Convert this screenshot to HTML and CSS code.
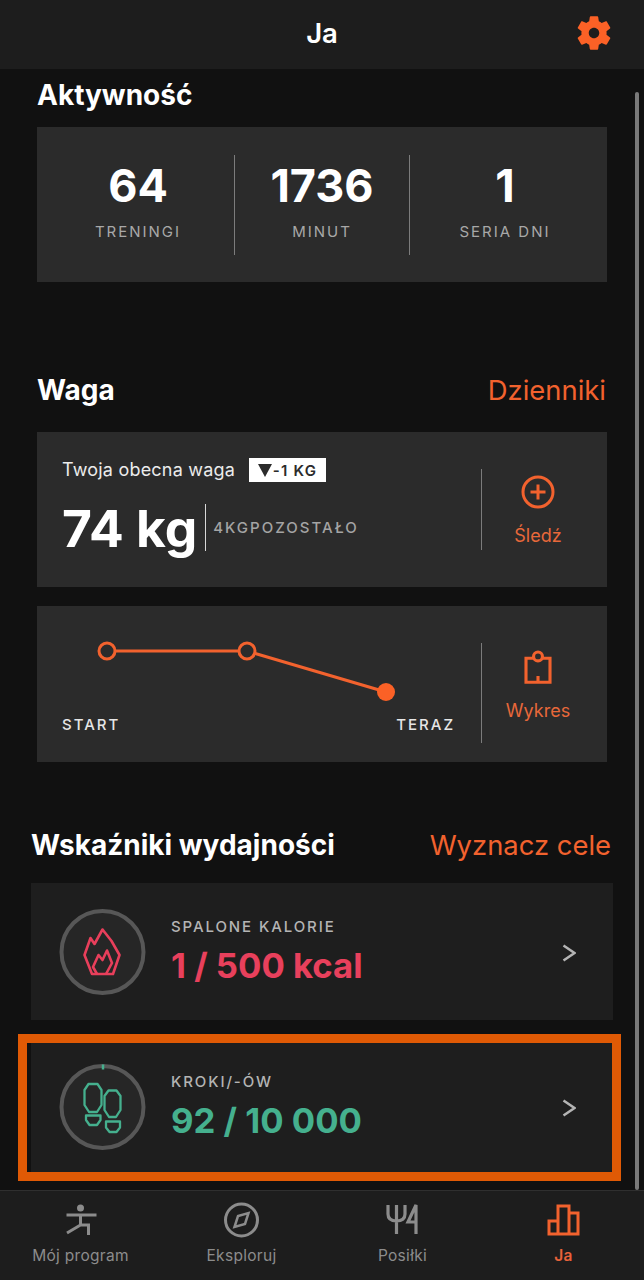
FILE: index.html
```html
<!DOCTYPE html>
<html lang="pl">
<head>
<meta charset="utf-8">
<title>Ja</title>
<link rel="stylesheet" href="styles.css">
</head>
<body>
<div class="app">
  <header class="topbar">
    <h1 class="topbar-title">Ja</h1>
    <svg class="gear" viewBox="0 0 24 24"><path fill-rule="evenodd" d="M19.14 12.94c.04-.3.06-.61.06-.94 0-.32-.02-.64-.07-.94l2.03-1.58c.18-.14.23-.41.12-.61l-1.92-3.32c-.12-.22-.37-.29-.59-.22l-2.39.96c-.5-.38-1.03-.7-1.62-.94l-.36-2.54c-.04-.24-.24-.41-.48-.41h-3.84c-.24 0-.43.17-.47.41l-.36 2.54c-.59.24-1.13.57-1.62.94l-2.39-.96c-.22-.08-.47 0-.59.22L2.74 8.87c-.12.21-.08.47.12.61l2.03 1.58c-.05.3-.09.63-.09.94s.02.64.07.94l-2.03 1.58c-.18.14-.23.41-.12.61l1.92 3.32c.12.22.37.29.59.22l2.39-.96c.5.38 1.03.7 1.62.94l.36 2.54c.05.24.24.41.48.41h3.84c.24 0 .44-.17.47-.41l.36-2.54c.59-.24 1.13-.56 1.62-.94l2.39.96c.22.08.47 0 .59-.22l1.92-3.32c.12-.22.07-.47-.12-.61l-2.01-1.58zM12 15c-1.66 0-3-1.34-3-3s1.34-3 3-3 3 1.34 3 3-1.34 3-3 3z"/></svg>
  </header>

  <main class="content">
    <div class="scrollbar"></div>

    <section class="section section-activity">
      <h2 class="section-title">Aktywność</h2>
      <div class="card stats">
        <div class="stat stat-a"><div class="stat-value">64</div><div class="stat-label">TRENINGI</div></div>
        <div class="stat stat-b"><div class="stat-value">1736</div><div class="stat-label">MINUT</div></div>
        <div class="stat stat-c"><div class="stat-value">1</div><div class="stat-label">SERIA DNI</div></div>
      </div>
    </section>

    <section class="section section-weight">
      <div class="section-head">
        <h2 class="section-title">Waga</h2>
        <span class="section-link">Dzienniki</span>
      </div>
      <div class="card weight-card">
        <div class="weight-main">
          <div class="weight-top">
            <span class="weight-caption">Twoja obecna waga</span>
            <span class="badge"><span class="badge-arrow"></span>-1 KG</span>
          </div>
          <div class="weight-bottom">
            <span class="weight-value">74 kg</span>
            <span class="weight-left">4KGPOZOSTAŁO</span>
          </div>
        </div>
        <div class="side-action">
          <svg class="side-icon" viewBox="0 0 36 36"><circle cx="18" cy="18" r="15"/><path d="M10.500 18h15M18 10.500v15"/></svg>
          <span class="side-label">Śledź</span>
        </div>
      </div>
      <div class="card chart-card">
        <div class="chart">
          <svg class="chart-svg" viewBox="0 0 419 60">
            <path d="M53 8H185L324 49"/>
            <circle cx="45" cy="8" r="8"/>
            <circle cx="185" cy="8" r="8"/>
            <circle class="chart-now" cx="324" cy="49" r="9"/>
          </svg>
          <div class="chart-labels"><span>START</span><span>TERAZ</span></div>
        </div>
        <div class="side-action side-action-chart">
          <svg class="side-icon side-icon-clip" viewBox="0 0 36 40"><path d="M13 9H4.500V36H31.500V9H23M18 36V29"/><circle cx="18" cy="7" r="5"/></svg>
          <span class="side-label">Wykres</span>
        </div>
      </div>
    </section>

    <section class="section section-perf">
      <div class="section-head">
        <h2 class="section-title">Wskaźniki wydajności</h2>
        <span class="section-link">Wyznacz cele</span>
      </div>
      <div class="perf-card">
        <svg class="ring ring-red" viewBox="0 0 110 110">
          <circle class="ring-track" cx="52.500" cy="52" r="41"/>
          <path class="ring-icon" d="M40.500 38L44.500 44L52.500 29.500L61.500 41L69.500 55L63 74H42L34.500 55Z"/>
          <path class="ring-icon" d="M47 74L43 67L48.500 55L52.500 60L57 50.500L62 63L56 74"/>
        </svg>
        <div class="perf-text">
          <div class="perf-title">SPALONE KALORIE</div>
          <div class="perf-value perf-red">1 / 500 kcal</div>
        </div>
        <svg class="chevron" viewBox="0 0 14 18"><path d="M1.500 1.500L12.500 9L1.500 16.500"/></svg>
      </div>
      <div class="perf-card">
        <svg class="ring ring-green" viewBox="0 0 110 110">
          <circle class="ring-track" cx="52.500" cy="52" r="41"/>
          <path class="ring-tick" d="M53 9.500v5"/>
          <path class="ring-icon" d="M38.500 29H47.500L51.500 35V50L47 57H39L34.500 50V35ZM36 60.500H50.500V65L47 70H39.500L36 65ZM58.500 35.500H66.500L70.500 41V55L66 62H59L54.500 55V41ZM56 66.500H70V72.500L66.500 77H59.500L56 72.500Z"/>
        </svg>
        <div class="perf-text">
          <div class="perf-title">KROKI/-ÓW</div>
          <div class="perf-value perf-green">92 / 10 000</div>
        </div>
        <svg class="chevron" viewBox="0 0 14 18"><path d="M1.500 1.500L12.500 9L1.500 16.500"/></svg>
      </div>
    </section>
  </main>

  <nav class="tabbar">
    <div class="tab">
      <svg class="tab-icon" viewBox="0 0 44 36"><circle class="tab-solid" cx="21.500" cy="6" r="3.500"/><path d="M7.500 13H37.500M21.500 13V23H29.500V33M21.500 23L8 31"/></svg>
      <span class="tab-label">Mój program</span>
    </div>
    <div class="tab">
      <svg class="tab-icon" viewBox="0 0 44 36"><circle cx="21.500" cy="18" r="16"/><path class="tab-thin" d="M28.500 11L25 22L14.500 25L18 14Z"/></svg>
      <span class="tab-label">Eksploruj</span>
    </div>
    <div class="tab">
      <svg class="tab-icon" viewBox="0 0 44 36"><path class="tab-thick" d="M7 3V12Q7 19 15.500 19Q24 19 24 12V3M15.500 3V32M35 32V3L27 20H35"/></svg>
      <span class="tab-label">Posiłki</span>
    </div>
    <div class="tab tab-active">
      <svg class="tab-icon" viewBox="0 0 44 36"><path d="M7 32V19H16V32ZM16 32V4H27V32ZM27 32V11H36V32Z"/></svg>
      <span class="tab-label">Ja</span>
    </div>
  </nav>

  <div class="highlight"></div>
</div>
</body>
</html>
```

FILE: styles.css
```css
* { box-sizing: border-box; }
html, body { margin: 0; padding: 0; }
body { background: #111; font-family: Inter, "Liberation Sans", sans-serif; color: #fff; }

.app { position: relative; width: 644px; height: 1280px; display: flex; flex-direction: column; overflow: hidden; background: #111; }

.topbar { flex: none; height: 69px; background: #1d1d1d; display: flex; align-items: center; justify-content: center; position: relative; }
.topbar-title { margin: 0 0 3px; font-size: 27.500px; font-weight: 600; }
.gear { position: absolute; right: 29px; top: 12px; width: 42px; height: 42px; fill: #fb6126; }

.content { flex: 1; min-height: 0; position: relative; overflow: hidden; display: flex; flex-direction: column; }
.scrollbar { position: absolute; right: 5px; top: 23px; bottom: 0; width: 4px; border-radius: 2px; background: #7a7a7a; }

.section { display: flex; flex-direction: column; }
.section-activity { padding: 10px 37px 0 37px; gap: 16px; }
.section-weight { padding: 92px 37px 0 37px; }
.section-perf { padding: 67px 31px 0 31px; }

.section-title { margin: 0; font-size: 28px; line-height: 32px; font-weight: 700; color: #fff; }
.section-head { display: flex; justify-content: space-between; align-items: center; }
.section-link { font-size: 27.400px; line-height: 32px; font-weight: 400; color: #f2622e; }
.section-perf .section-link { margin-right: 2px; margin-top: -1px; }
.section-weight .section-link { margin-right: 1px; }

.card { background: #2b2b2b; height: 155px; }

.stats { display: grid; grid-template-columns: 192px 176px 190px; align-items: center; padding-left: 5px; }
.stat { height: 100px; display: flex; flex-direction: column; align-items: center; }
.stat-b { border-left: 1px solid #7c7c7c; border-right: 1px solid #7c7c7c; }
.stat-value { font-size: 45px; line-height: 62px; font-weight: 700; color: #fff; }
.stat-label { margin-top: 5px; font-size: 15px; line-height: 20px; letter-spacing: 2px; color: #a8a8a8; }

.weight-card { margin-top: 26px; display: flex; padding: 26px 0 0 25px; }
.weight-main { width: 419px; }
.weight-top { display: flex; align-items: center; gap: 14px; }
.weight-caption { font-size: 18px; line-height: 24px; letter-spacing: 0.200px; color: #ececec; }
.badge { width: 77px; height: 24px; background: #fff; color: #2b2b2b; font-size: 15px; font-weight: 600; letter-spacing: 1.200px; display: flex; align-items: center; justify-content: center; gap: 1px; }
.badge-arrow { width: 0; height: 0; border-left: 7.500px solid transparent; border-right: 7.500px solid transparent; border-top: 13px solid #2b2b2b; }
.weight-bottom { display: flex; align-items: center; margin-top: 22px; height: 47px; }
.weight-value { font-size: 51.500px; line-height: 49px; font-weight: 700; color: #fff; padding-right: 8px; border-right: 1px solid #d8d8d8; height: 47px; white-space: nowrap; }
.weight-left { margin-left: 7px; font-size: 15px; letter-spacing: 2px; font-weight: 500; color: #a4a4a4; }

.side-action { width: 113px; height: 81px; margin-top: 11px; border-left: 1px solid #7c7c7c; display: flex; flex-direction: column; align-items: center; }
.side-icon { width: 36px; height: 36px; margin-top: 5px; fill: none; stroke: #f2622e; stroke-width: 3; }
.side-label { margin-top: 14px; font-size: 18px; line-height: 24px; color: #e8683a; }

.chart-card { margin-top: 19px; height: 156px; display: flex; padding: 37px 0 0 25px; }
.chart { width: 419px; display: flex; flex-direction: column; }
.chart-svg { width: 419px; height: 60px; overflow: visible; }
.chart-svg path { fill: none; stroke: #f2622e; stroke-width: 3; }
.chart-svg circle { fill: #2b2b2b; stroke: #f2622e; stroke-width: 3; }
.chart-svg .chart-now { fill: #fb6126; stroke: none; }
.chart-labels { width: 393px; margin-top: 12px; display: flex; justify-content: space-between; font-size: 15px; line-height: 20px; font-weight: 500; letter-spacing: 2px; color: #e6e6e6; }

.side-action-chart { height: 100px; margin-top: 0; }
.side-icon-clip { width: 32px; height: 36px; margin-top: 7px; stroke-width: 3.500; }
.side-action-chart .side-label { margin-top: 13px; }

.perf-card { background: #1e1e1e; height: 137px; display: flex; align-items: center; padding-left: 19px; }
.section-head + .perf-card { margin-top: 22px; }
.perf-card + .perf-card { margin-top: 18px; }
.ring { width: 110px; height: 110px; flex: none; margin-top: 7px; }
.ring-track { fill: #262626; stroke: #575757; stroke-width: 4; }
.ring-icon { fill: none; stroke-width: 2.600; stroke-linejoin: round; }
.ring-red .ring-icon { stroke: #e83f5b; }
.ring-green .ring-icon { stroke: #45b08e; stroke-width: 2.300; }
.ring-tick { fill: none; stroke: #45b08e; stroke-width: 2.500; }
.perf-text { margin-left: 11px; flex: 1; }
.perf-title { font-size: 15px; line-height: 20px; letter-spacing: 1.900px; font-weight: 500; color: #b4b4b4; }
.perf-value { margin-top: 6px; font-size: 34.700px; line-height: 44px; font-weight: 700; }
.perf-red { color: #e8405c; }
.perf-green { color: #45b08e; }
.chevron { flex: none; width: 14px; height: 18px; margin-top: 2px; margin-right: 37px; fill: none; stroke: #b4b4b4; stroke-width: 2.500; }

.tabbar { flex: none; height: 90px; background: #1d1d1d; border-top: 1px solid #2f2f2f; display: grid; grid-template-columns: repeat(4, 161px); }
.tab { display: flex; flex-direction: column; align-items: center; padding-top: 11px; color: #8c8c8c; }
.tab-icon { width: 44px; height: 36px; fill: none; stroke: #8c8c8c; stroke-width: 3; }
.tab-thin { stroke-width: 2.500; }
.tab-thick { stroke-width: 3.200; }
.tab-solid { fill: #8c8c8c; stroke: none; }
.tab-label { margin-top: 7px; font-size: 15.500px; line-height: 22px; letter-spacing: 0.300px; }
.tab-active { color: #e8623a; }
.tab-active .tab-icon { stroke: #f2622e; }
.tab-active .tab-label { font-weight: 600; }

.highlight { position: absolute; left: 18px; top: 1034px; width: 603px; height: 147px; border: 9px solid #e05a05; pointer-events: none; }
```
